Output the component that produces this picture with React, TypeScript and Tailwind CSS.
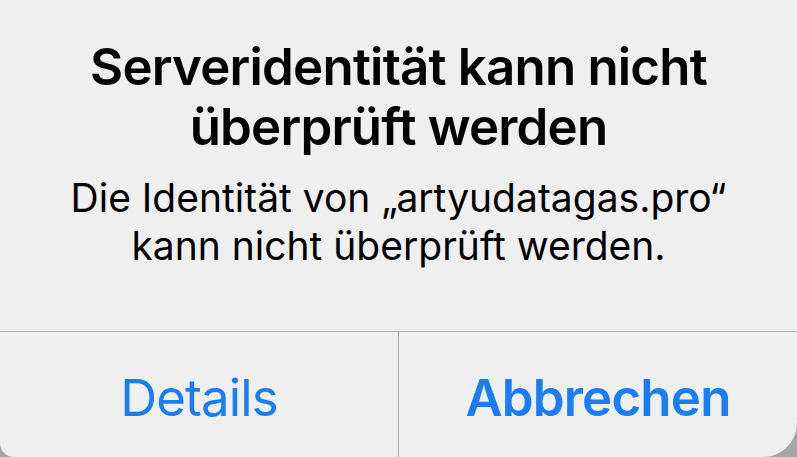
import React from 'react';

const font = { fontFamily: 'Inter, "Noto Sans", "Liberation Sans", sans-serif' };

export default function App() {
  return (
    <div className="w-[797px] h-[457px] bg-[#a6a6a6] overflow-hidden" style={font}>
      <div className="w-[797px] h-[457px] bg-[#efeff0] rounded-bl-[14px] rounded-br-[34px] flex flex-col">
        <div className="h-[331px] flex flex-col items-center pt-[37px] text-center text-black">
          <h1 className="text-[51px] leading-[60px] font-semibold tracking-[-0.8px]">
            Serveridentität kann nicht
            <br />
            überprüft werden
          </h1>
          <p className="mt-[17px] text-[39px] leading-[48px] font-normal">
            Die Identität von „artyudatagas.pro“
            <br />
            kann nicht überprüft werden.
          </p>
        </div>
        <div className="h-px bg-[#ababab]" />
        <div className="flex flex-1">
          <button className="flex-1 flex items-center justify-center text-[51px] text-[#1a7ef2] font-normal tracking-[-0.9px] pt-[7px]">
            Details
          </button>
          <div className="w-px bg-[#ababab]" />
          <button className="flex-1 flex items-center justify-center text-[51px] text-[#1a7ef2] font-semibold tracking-[-0.8px] pt-[7px]">
            Abbrechen
          </button>
        </div>
      </div>
    </div>
  );
}
